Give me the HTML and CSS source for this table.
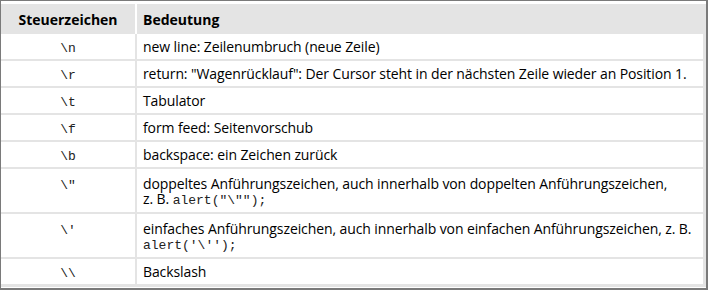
FILE: index.html
```html
<!DOCTYPE html>
<html lang="de">
<head>
<meta charset="utf-8">
<link rel="stylesheet" href="styles.css">
</head>
<body>
<div class="frame">
  <table class="tbl">
    <thead>
      <tr><th class="c1">Steuerzeichen</th><th class="c2">Bedeutung</th></tr>
    </thead>
    <tbody>
      <tr><td class="c1"><code>\n</code></td><td class="c2">new line: Zeilenumbruch (neue Zeile)</td></tr>
      <tr><td class="c1"><code>\r</code></td><td class="c2">return: "Wagenrücklauf": Der Cursor steht in der nächsten Zeile wieder an Position 1.</td></tr>
      <tr><td class="c1"><code>\t</code></td><td class="c2">Tabulator</td></tr>
      <tr><td class="c1"><code>\f</code></td><td class="c2">form feed: Seitenvorschub</td></tr>
      <tr><td class="c1"><code>\b</code></td><td class="c2">backspace: ein Zeichen zurück</td></tr>
      <tr class="two"><td class="c1"><code>\"</code></td><td class="c2">doppeltes Anführungszeichen, auch innerhalb von doppelten Anführungszeichen,<br>z. B. <code>alert("\"");</code></td></tr>
      <tr class="two"><td class="c1"><code>\'</code></td><td class="c2">einfaches Anführungszeichen, auch innerhalb von einfachen Anführungszeichen, z. B.<br><code>alert('\'');</code></td></tr>
      <tr><td class="c1"><code>\\</code></td><td class="c2">Backslash</td></tr>
    </tbody>
  </table>
</div>
</body>
</html>
```
FILE: styles.css
```css
html, body { margin: 0; padding: 0; background: #fff; }
.frame {
  width: 708px;
  height: 290px;
  box-sizing: border-box;
  border: 1px solid #7a7a7a;
  border-right-width: 2px;
  border-bottom-width: 2px;
  padding-top: 3px;
  background: #fff;
  overflow: hidden;
}
.tbl {
  border-collapse: separate;
  border-spacing: 0;
  width: 705px;
  background: #e4e4e4;
  padding: 0 3px 3px 0;
  box-sizing: border-box;
  font-family: "Open Sans", "Liberation Sans", sans-serif;
  font-size: 14px;
  color: #000;
}
.tbl th {
  background: #e4e4e4;
  font-weight: bold;
  height: 30px;
  padding: 0;
  text-align: left;
  line-height: 15px;
}
.tbl th.c1 { text-align: center; border-right: 2px solid #fff; }
.tbl th.c2 { padding-left: 6px; }
.tbl td {
  background: #fff;
  padding: 5px 6px 5px 6px;
  line-height: 15px;
  border-top: 2px solid #e4e4e4;
  vertical-align: top;
  white-space: nowrap;
}
.tbl tbody tr:first-child td { border-top: 0; }
.tbl tr.two td { padding-top: 7px; padding-bottom: 6px; }
.tbl td.c1 {
  width: 136px;
  box-sizing: border-box;
  text-align: center;
  border-right: 2px solid #e4e4e4;
}
.tbl td.c2 { letter-spacing: -0.1px; }
.tbl th.c1 { width: 136px; box-sizing: border-box; }
code {
  font-family: "Liberation Mono", "Courier New", monospace;
  font-size: 13px;
  line-height: 10px;
  vertical-align: baseline;
  letter-spacing: 0;
  color: #222;
}
```
